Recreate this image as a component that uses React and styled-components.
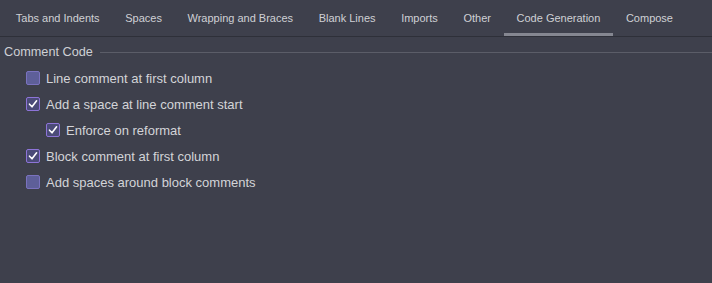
import React from 'react'
import styled, { createGlobalStyle } from 'styled-components'

const Global = createGlobalStyle`
  html, body { margin: 0; padding: 0; background: #3e404c; }
  body { font-family: "Liberation Sans", Arial, sans-serif; }
`

const Page = styled.div`
  width: 712px;
  height: 283px;
  background: #3e404c;
  overflow: hidden;
`

const TabBar = styled.div`
  display: flex;
  height: 36px;
  padding-left: 3px;
  border-bottom: 1px solid #2e3039;
`

const Tab = styled.div`
  display: flex;
  align-items: center;
  padding: 0 12.8px;
  font-size: 11px;
  color: #cfd0d5;
  box-sizing: border-box;
  border-bottom: 3px solid ${p => (p.$active ? '#858791' : 'transparent')};
  padding-top: 3px;
`

const Group = styled.div`
  padding: 7px 0 0 4px;
`

const GroupTitle = styled.div`
  display: flex;
  align-items: center;
  gap: 7px;
  font-size: 12.7px;
  color: #cfd0d5;
  height: 16px;
  &::after {
    content: '';
    flex: 1;
    height: 1px;
    background: #5b5d68;
  }
`

const List = styled.div`
  display: flex;
  flex-direction: column;
  padding-top: 5px;
`

const Row = styled.label`
  display: flex;
  align-items: center;
  height: 26px;
  gap: 6px;
  padding-left: ${p => 22 + p.$level * 20}px;
  font-size: 13px;
  color: #d3d4d8;
`

const Box = styled.span`
  width: 14px;
  height: 14px;
  box-sizing: border-box;
  border-radius: 2px;
  display: inline-flex;
  align-items: center;
  justify-content: center;
  border: 1px solid ${p => (p.$checked ? '#8d74d8' : '#7a72bf')};
  background: ${p => (p.$checked ? '#4b4b78' : '#5e5f99')};
`

const Check = () => (
  <svg width="10" height="10" viewBox="0 0 10 10">
    <path d="M1.5 5.2 L4 7.8 L8.6 1.8" fill="none" stroke="#ffffff" strokeWidth="1.6" strokeLinecap="round" strokeLinejoin="round" />
  </svg>
)

const tabs = ['Tabs and Indents', 'Spaces', 'Wrapping and Braces', 'Blank Lines', 'Imports', 'Other', 'Code Generation', 'Compose']

const options = [
  { label: 'Line comment at first column', checked: false, level: 0 },
  { label: 'Add a space at line comment start', checked: true, level: 0 },
  { label: 'Enforce on reformat', checked: true, level: 1 },
  { label: 'Block comment at first column', checked: true, level: 0 },
  { label: 'Add spaces around block comments', checked: false, level: 0 },
]

export default function App() {
  return (
    <Page>
      <Global />
      <TabBar>
        {tabs.map(t => (
          <Tab key={t} $active={t === 'Code Generation'}>{t}</Tab>
        ))}
      </TabBar>
      <Group>
        <GroupTitle>Comment Code</GroupTitle>
        <List>
          {options.map(o => (
            <Row key={o.label} $level={o.level}>
              <Box $checked={o.checked}>{o.checked && <Check />}</Box>
              {o.label}
            </Row>
          ))}
        </List>
      </Group>
    </Page>
  )
}
